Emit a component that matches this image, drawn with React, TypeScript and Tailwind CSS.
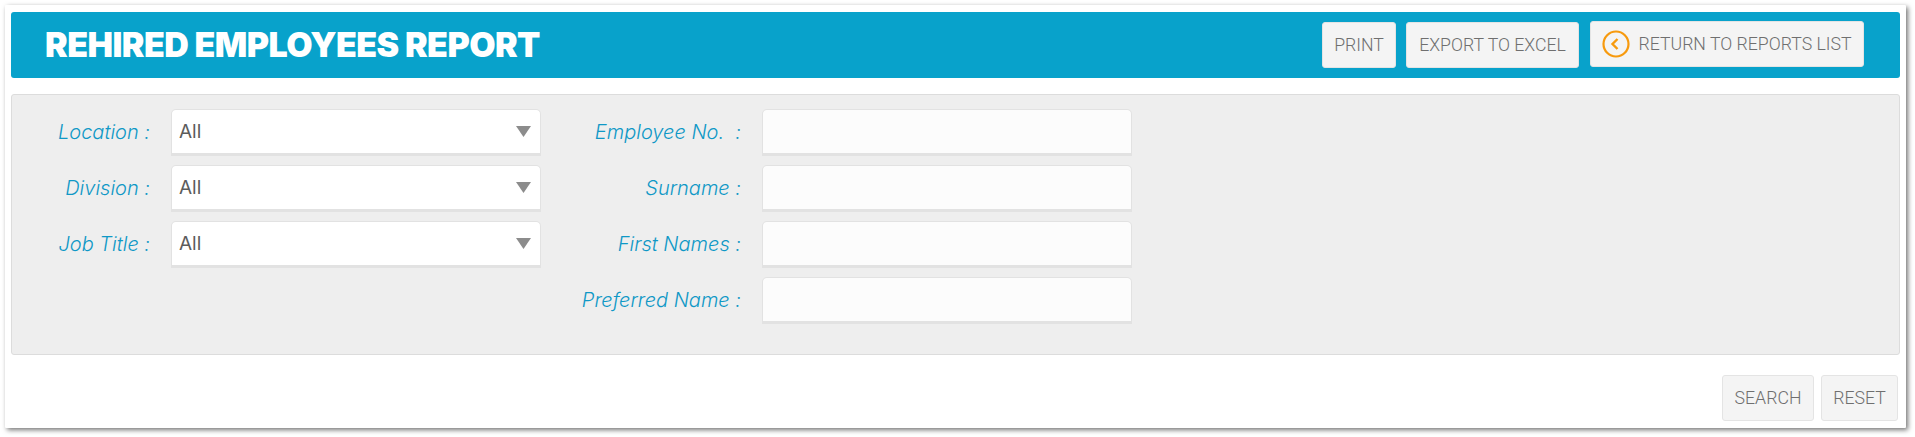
import React from "react";

const Arrow = () => (
  <svg width="15" height="11" viewBox="0 0 15 11" className="block">
    <path d="M0 0H15L7.5 11Z" fill="#8c8c8c" />
  </svg>
);

const Sel = () => (
  <div className="flex h-[47px] w-[370px] items-center justify-between rounded-t-[5px] border border-b-[3px] border-[#e2e2e2] bg-white pl-[7px] pr-[9px] text-[19px] text-[#5c5c5c]">
    <span className="relative top-[1px]">All</span>
    <Arrow />
  </div>
);

const Inp = () => (
  <div className="h-[47px] w-[370px] rounded-t-[5px] border border-b-[3px] border-[#e2e2e2] bg-[#fcfcfc]" />
);

const Label = ({ children, w }: { children: string; w: string }) => (
  <div className={`${w} relative top-[-1px] whitespace-pre pr-[21px] text-right text-[20px] font-light italic text-[#0f98c6]`}>{children}</div>
);

const Btn = ({ children, cls }: { children: React.ReactNode; cls: string }) => (
  <div className={`flex items-center justify-center rounded-[3px] border border-[#e4e4e4] bg-[#f4f4f4] font-['Roboto',sans-serif] text-[17.7px] font-light text-[#6f6f6f] ${cls}`}>{children}</div>
);

export default function App() {
  return (
    <div className="h-[437px] w-[1915px] bg-white pl-[5px] pr-[9px] pt-[5px] pb-[9px] font-['Inter',sans-serif]">
      <div className="h-[423px] rounded-[1px] bg-white px-[6px] pt-[7px] shadow-[2px_2px_5px_rgba(0,0,0,0.55)]">
        <div className="flex h-[66px] items-center justify-between rounded-[3px] bg-[#08a2cb] pl-[34px] pr-[36px]">
          <div className="relative top-[-1px] text-[34px] font-black tracking-[-0.55px] text-white">REHIRED EMPLOYEES REPORT</div>
          <div className="flex items-center pb-[2px]">
            <Btn cls="h-[46px] w-[74px] mt-[2px]">PRINT</Btn>
            <Btn cls="ml-[10px] h-[46px] w-[173px] mt-[2px]">EXPORT TO EXCEL</Btn>
            <Btn cls="ml-[11px] h-[46px] w-[274px] gap-[8px]">
              <svg width="28" height="28" viewBox="0 0 28 28">
                <circle cx="14" cy="14" r="12.5" fill="none" stroke="#f79a0e" strokeWidth="2.2" />
                <path d="M15.5 9L10.5 14L15.5 19" fill="none" stroke="#f79a0e" strokeWidth="2.4" />
              </svg>
              <span>RETURN TO REPORTS LIST</span>
            </Btn>
          </div>
        </div>
        <div className="mt-[16px] h-[261px] rounded-[3px] border border-[#dcdcdc] bg-[#eeeeee] pt-[14px]">
          <div className="flex">
            <div className="flex flex-col gap-[9px]">
              {["Location :", "Division :", "Job Title :"].map((t) => (
                <div key={t} className="flex items-center">
                  <Label w="w-[159px]">{t}</Label>
                  <Sel />
                </div>
              ))}
            </div>
            <div className="flex flex-col gap-[9px]">
              {["Employee No.  :", "Surname :", "First Names :", "Preferred Name :"].map((t) => (
                <div key={t} className="flex items-center">
                  <Label w="w-[221px]">{t}</Label>
                  <Inp />
                </div>
              ))}
            </div>
          </div>
        </div>
        <div className="mt-[20px] mr-[2px] flex justify-end gap-[7px]">
          <Btn cls="h-[46px] w-[92px]">SEARCH</Btn>
          <Btn cls="h-[46px] w-[77px]">RESET</Btn>
        </div>
      </div>
    </div>
  );
}
